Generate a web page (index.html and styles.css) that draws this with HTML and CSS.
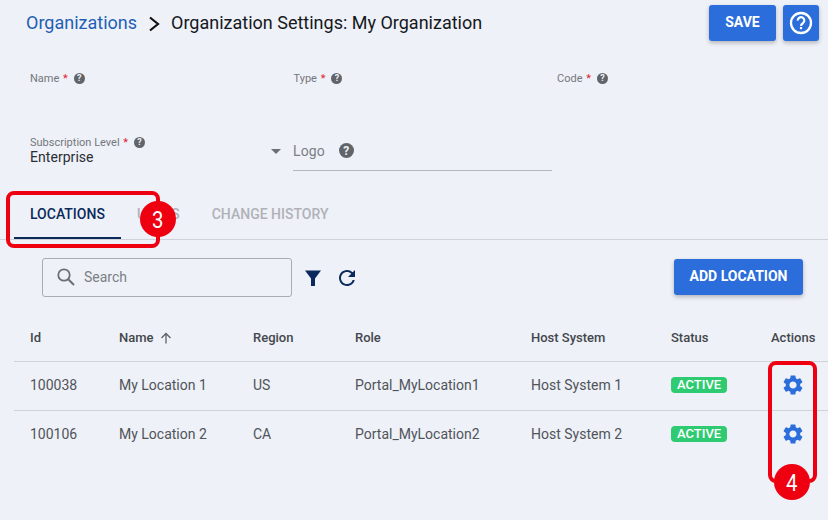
FILE: index.html
```html
<!DOCTYPE html>
<html lang="en">
<head>
    <meta charset="UTF-8">
    <meta name="viewport" content="width=device-width, initial-scale=1.0">
    <title>Organization Settings</title>
    <link rel="stylesheet" href="styles.css">
</head>
<body>
    <div class="page">
        <header class="top-bar">
            <div class="breadcrumb">
                <a class="crumb-link" href="#">Organizations</a>
                <svg class="crumb-arrow" viewBox="0 0 12 16" width="12" height="16"><path d="M2 1.5 L10 8 L2 14.5" fill="none" stroke="#111" stroke-width="2.2"/></svg>
                <span class="crumb-current">Organization Settings: My Organization</span>
            </div>
            <div class="top-actions">
                <button class="btn btn-save">SAVE</button>
                <button class="btn btn-help" aria-label="Help">
                    <svg viewBox="0 0 24 24" width="24" height="24"><circle cx="12" cy="12" r="10" fill="none" stroke="#fff" stroke-width="2.3"/><path d="M8.7 9.6a3.3 3.3 0 1 1 5.2 2.6c-1.2.9-1.9 1.4-1.9 2.8" fill="none" stroke="#fff" stroke-width="2.2"/><rect x="10.9" y="16" width="2.2" height="2.2" fill="#fff"/></svg>
                </button>
            </div>
        </header>

        <section class="form-row form-row-first">
            <div class="field"><span class="label">Name <em>*</em></span><span class="hint">?</span></div>
            <div class="field"><span class="label">Type <em>*</em></span><span class="hint">?</span></div>
            <div class="field"><span class="label">Code <em>*</em></span><span class="hint">?</span></div>
        </section>

        <section class="form-row form-row-second">
            <div class="select-field">
                <div class="field"><span class="label">Subscription Level <em>*</em></span><span class="hint">?</span></div>
                <div class="select-value">Enterprise</div>
                <span class="caret"></span>
            </div>
            <div class="logo-field">
                <span class="logo-label">Logo</span><span class="hint hint-large">?</span>
            </div>
        </section>

        <nav class="tabs">
            <a class="tab tab-active" href="#">LOCATIONS</a>
            <a class="tab" href="#">USERS</a>
            <a class="tab" href="#">CHANGE HISTORY</a>
        </nav>

        <div class="toolbar">
            <div class="search-box">
                <svg viewBox="0 0 18 18" width="18" height="18"><circle cx="7" cy="7" r="5.7" fill="none" stroke="#6b6f76" stroke-width="1.8"/><path d="M11.2 11.2 L17 17" stroke="#6b6f76" stroke-width="2"/></svg>
                <span class="search-text">Search</span>
            </div>
            <svg class="tool-icon" viewBox="0 0 18 18" width="18" height="18"><path d="M1 1.5 H17 L11 9.5 V17 H7 V9.5 Z" fill="#0b2a5b"/></svg>
            <svg class="tool-icon tool-refresh" viewBox="3 3 18 18" width="18" height="18"><path fill="#0b2a5b" d="M17.65 6.35A7.958 7.958 0 0 0 12 4c-4.42 0-7.99 3.58-7.99 8s3.57 8 7.99 8c3.73 0 6.84-2.55 7.73-6h-2.08A5.99 5.99 0 0 1 12 18c-3.31 0-6-2.69-6-6s2.69-6 6-6c1.66 0 3.14.69 4.22 1.78L13 11h7V4l-2.35 2.35z"/></svg>
            <button class="btn btn-add">ADD LOCATION</button>
        </div>

        <table class="data-table">
            <thead>
                <tr>
                    <th class="col-id">Id</th>
                    <th class="col-name">Name <svg viewBox="0 0 12 12" width="12" height="12"><path d="M6 11.5 V1.5 M1.5 6 L6 1.5 L10.5 6" fill="none" stroke="#5f6368" stroke-width="1.3"/></svg></th>
                    <th class="col-region">Region</th>
                    <th class="col-role">Role</th>
                    <th class="col-host">Host System</th>
                    <th class="col-status">Status</th>
                    <th>Actions</th>
                </tr>
            </thead>
            <tbody>
                <tr>
                    <td>100038</td>
                    <td>My Location 1</td>
                    <td>US</td>
                    <td>Portal_MyLocation1</td>
                    <td>Host System 1</td>
                    <td><span class="badge">ACTIVE</span></td>
                    <td class="action-cell"><svg viewBox="0 0 24 24" width="24" height="24"><path fill="#2a6ddb" d="M19.14 12.94c.04-.3.06-.61.06-.94 0-.32-.02-.64-.07-.94l2.03-1.58a.49.49 0 0 0 .12-.61l-1.92-3.32a.488.488 0 0 0-.59-.22l-2.39.96c-.5-.38-1.03-.7-1.62-.94l-.36-2.54a.484.484 0 0 0-.48-.41h-3.84c-.24 0-.43.17-.47.41l-.36 2.54c-.59.24-1.13.57-1.62.94l-2.39-.96c-.22-.08-.47 0-.59.22L2.74 8.87c-.12.21-.08.47.12.61l2.03 1.58c-.05.3-.09.63-.09.94s.02.64.07.94l-2.03 1.58a.49.49 0 0 0-.12.61l1.92 3.32c.12.22.37.29.59.22l2.39-.96c.5.38 1.03.7 1.62.94l.36 2.54c.05.24.24.41.48.41h3.84c.24 0 .44-.17.47-.41l.36-2.54c.59-.24 1.13-.56 1.62-.94l2.39.96c.22.08.47 0 .59-.22l1.92-3.32c.12-.22.07-.47-.12-.61l-2.01-1.58zM12 15.6c-1.98 0-3.6-1.62-3.6-3.6s1.62-3.6 3.6-3.6 3.6 1.62 3.6 3.6-1.62 3.6-3.6 3.6z"/></svg></td>
                </tr>
                <tr>
                    <td>100106</td>
                    <td>My Location 2</td>
                    <td>CA</td>
                    <td>Portal_MyLocation2</td>
                    <td>Host System 2</td>
                    <td><span class="badge">ACTIVE</span></td>
                    <td class="action-cell"><svg viewBox="0 0 24 24" width="24" height="24"><path fill="#2a6ddb" d="M19.14 12.94c.04-.3.06-.61.06-.94 0-.32-.02-.64-.07-.94l2.03-1.58a.49.49 0 0 0 .12-.61l-1.92-3.32a.488.488 0 0 0-.59-.22l-2.39.96c-.5-.38-1.03-.7-1.62-.94l-.36-2.54a.484.484 0 0 0-.48-.41h-3.84c-.24 0-.43.17-.47.41l-.36 2.54c-.59.24-1.13.57-1.62.94l-2.39-.96c-.22-.08-.47 0-.59.22L2.74 8.87c-.12.21-.08.47.12.61l2.03 1.58c-.05.3-.09.63-.09.94s.02.64.07.94l-2.03 1.58a.49.49 0 0 0-.12.61l1.92 3.32c.12.22.37.29.59.22l2.39-.96c.5.38 1.03.7 1.62.94l.36 2.54c.05.24.24.41.48.41h3.84c.24 0 .44-.17.47-.41l.36-2.54c.59-.24 1.13-.56 1.62-.94l2.39.96c.22.08.47 0 .59-.22l1.92-3.32c.12-.22.07-.47-.12-.61l-2.01-1.58zM12 15.6c-1.98 0-3.6-1.62-3.6-3.6s1.62-3.6 3.6-3.6 3.6 1.62 3.6 3.6-1.62 3.6-3.6 3.6z"/></svg></td>
                </tr>
            </tbody>
        </table>

        <!-- Callouts drawn over the page -->
        <div class="callout-box callout-tabs"></div>
        <div class="callout-num callout-num-3"><span>3</span></div>
        <div class="callout-box callout-actions"></div>
        <div class="callout-num callout-num-4"><span>4</span></div>
    </div>
</body>
</html>
```

FILE: styles.css
```css
html, body {
    margin: 0;
    padding: 0;
}

body {
    background-color: #eef1f7;
    font-family: Roboto, "Liberation Sans", sans-serif;
    color: #3c4043;
}

.page {
    position: relative;
    width: 828px;
    height: 520px;
    overflow: hidden;
}

/* Top bar */
.top-bar {
    display: flex;
    justify-content: space-between;
    align-items: flex-start;
    padding: 5px 9px 0 26px;
}

.breadcrumb {
    display: flex;
    align-items: center;
    height: 35px;
    font-size: 18px;
}

.crumb-link {
    color: #1f5fb5;
    text-decoration: none;
}

.crumb-arrow {
    margin: 2px 11px 0 11px;
}

.crumb-current {
    color: #15181c;
}

.top-actions {
    display: flex;
    gap: 7px;
}

.btn {
    border: none;
    border-radius: 3px;
    background-color: #2a6ddb;
    color: #fff;
    font-family: inherit;
    font-weight: 700;
    font-size: 14px;
    box-shadow: 0 2px 4px rgba(0, 0, 0, 0.25);
    padding: 0;
}

.btn-save {
    width: 67px;
    height: 36px;
    padding-bottom: 2px;
}

.btn-help {
    display: flex;
    align-items: center;
    justify-content: center;
    width: 36px;
    height: 36px;
}

/* Form */
.form-row {
    display: flex;
    padding-left: 30px;
}

.form-row-first {
    padding-top: 30px;
    height: 14px;
}

.form-row-first .field {
    width: 263.5px;
}

.field {
    display: flex;
    align-items: center;
    height: 14px;
}

.label {
    font-size: 11px;
    color: #73777d;
}

.label em {
    font-style: normal;
    margin-left: 1px;
    color: #e0222c;
}

.hint {
    display: inline-flex;
    align-items: center;
    justify-content: center;
    width: 11px;
    height: 11px;
    margin-left: 6px;
    border-radius: 50%;
    background-color: #616468;
    color: #eef1f7;
    font-size: 9px;
    font-weight: 700;
}

.hint-large {
    width: 15px;
    height: 15px;
    margin-left: 14px;
    font-size: 12px;
}

.form-row-second {
    padding-top: 50px;
    height: 44px;
}

.select-field {
    position: relative;
    width: 263px;
}

.select-value {
    font-size: 14px;
    line-height: 16px;
    letter-spacing: 0.05px;
    color: #2b2e33;
}

.caret {
    position: absolute;
    left: 241px;
    top: 14px;
    width: 0;
    height: 0;
    border-left: 5px solid transparent;
    border-right: 5px solid transparent;
    border-top: 5px solid #6b6f76;
}

.logo-field {
    display: flex;
    align-items: center;
    width: 259px;
    height: 37px;
    margin-top: -1px;
    padding-top: 1px;
    padding-bottom: 4px;
    box-sizing: border-box;
    border-bottom: 1px solid #b5b8be;
}

.logo-label {
    font-size: 14px;
    letter-spacing: 0.1px;
    color: #7b7f85;
}

/* Tabs */
.tabs {
    display: flex;
    height: 52px;
    margin-top: 9px;
    padding-left: 14px;
    box-sizing: border-box;
    border-bottom: 1px solid #cfd2d8;
}

.tab {
    display: flex;
    align-items: center;
    justify-content: center;
    height: 51px;
    padding: 0 16px;
    box-sizing: border-box;
    font-size: 14px;
    font-weight: 500;
    color: #b0b2b7;
    text-decoration: none;
}

.tab-active {
    padding-top: 2px;
    color: #0b2a5b;
    border-bottom: 2px solid #0b2a5b;
}

/* Toolbar */
.toolbar {
    display: flex;
    align-items: center;
    padding: 18px 25px 0 42px;
}

.search-box {
    display: flex;
    align-items: center;
    gap: 9px;
    width: 250px;
    height: 39px;
    padding-left: 14px;
    padding-bottom: 2px;
    box-sizing: border-box;
    border: 1px solid #a9adb3;
    border-radius: 3px;
}

.search-text {
    font-size: 14px;
    color: #7b7f85;
}

.tool-icon {
    margin-left: 12px;
}

.tool-refresh {
    margin-left: 16px;
}

.btn-add {
    width: 129px;
    height: 36px;
    margin-left: auto;
    margin-bottom: 1px;
    padding-bottom: 2px;
    font-size: 14px;
}

/* Table */
.data-table {
    width: 814px;
    margin: 20px 0 0 14px;
    border-collapse: collapse;
    table-layout: fixed;
    font-size: 14px;
}

.data-table th {
    height: 44px;
    padding: 0 0 2px 16px;
    box-sizing: border-box;
    text-align: left;
    font-size: 13px;
    font-weight: 500;
    color: #43474d;
    border-bottom: 1px solid #cfd2d8;
    vertical-align: middle;
}

.data-table td {
    height: 49px;
    padding: 0 0 2px 16px;
    box-sizing: border-box;
    color: #50545a;
    vertical-align: middle;
}

.data-table tbody tr:first-child td {
    border-bottom: 1px solid #cfd2d8;
}

.col-id { width: 89px; }
.col-name { width: 134px; }
.col-region { width: 102px; }
.col-role { width: 176px; }
.col-host { width: 140px; }
.col-status { width: 100px; }

.col-name svg {
    margin-left: 3px;
    vertical-align: -2px;
}

.badge {
    display: inline-block;
    padding: 0 6px;
    height: 16px;
    line-height: 16px;
    border-radius: 4px;
    background-color: #2fcb72;
    color: #fff;
    font-size: 13px;
    font-weight: 500;
}

.action-cell svg {
    display: block;
    margin-left: 10px;
}

/* Numbered callouts */
.callout-box {
    position: absolute;
    box-sizing: border-box;
    border: 4px solid #ee0010;
    border-radius: 8px;
}

.callout-tabs {
    left: 6px;
    top: 191px;
    width: 154px;
    height: 57px;
}

.callout-actions {
    left: 768px;
    top: 361px;
    width: 49px;
    height: 122px;
}

.callout-num {
    position: absolute;
    width: 36px;
    height: 36px;
    border-radius: 50%;
    background-color: #ee0010;
    color: #fff;
    font-size: 24px;
    line-height: 39px;
    text-align: center;
}

.callout-num span {
    display: inline-block;
    transform: scaleX(0.85);
}

.callout-num-3 {
    left: 140px;
    top: 201px;
}

.callout-num-4 {
    left: 774px;
    top: 464px;
}
```
